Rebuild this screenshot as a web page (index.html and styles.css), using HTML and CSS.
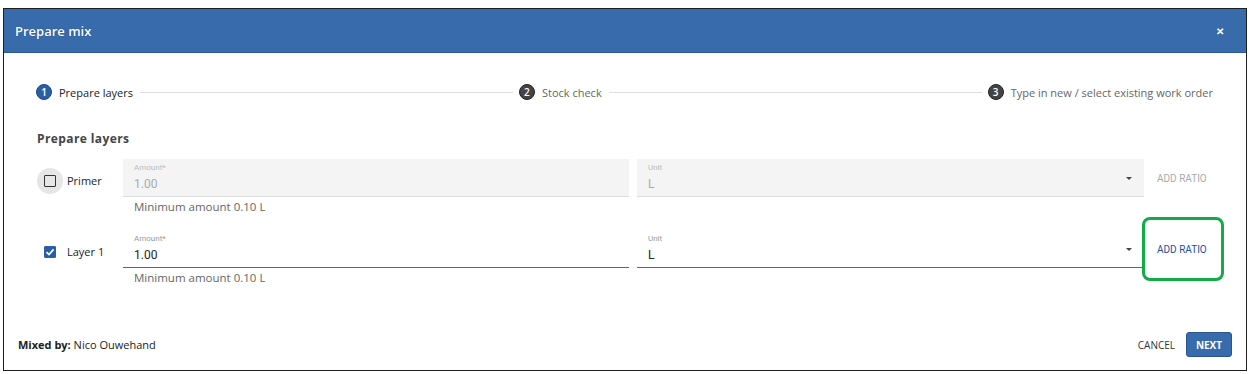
FILE: index.html
```html
<!DOCTYPE html>
<html lang="en">
<head>
    <meta charset="UTF-8">
    <title>Prepare mix</title>
    <link rel="stylesheet" href="styles.css">
</head>
<body>

<div class="dialog">
    <div class="dialog-header">
        <span class="dialog-title">Prepare mix</span>
        <span class="dialog-close">&#x2715;</span>
    </div>

    <div class="dialog-body">
        <div class="stepper">
            <div class="step active"><span class="step-num">1</span>Prepare layers</div>
            <div class="step-line"></div>
            <div class="step"><span class="step-num">2</span>Stock check</div>
            <div class="step-line"></div>
            <div class="step"><span class="step-num">3</span>Type in new / select existing work order</div>
        </div>

        <h3 class="section-title">Prepare layers</h3>

        <div class="layer-row">
            <div class="layer-check">
                <span class="ripple"><span class="checkbox"></span></span>
                <span class="layer-name">Primer</span>
            </div>
            <div class="field-col">
                <div class="field disabled">
                    <span class="field-label">Amount*</span>
                    <span class="field-value">1.00</span>
                </div>
                <div class="helper">Minimum amount 0.10 L</div>
            </div>
            <div class="field-col">
                <div class="field disabled select">
                    <span class="field-label">Unit</span>
                    <span class="field-value">L</span>
                    <span class="caret"></span>
                </div>
            </div>
            <div class="ratio-cell"><span class="ratio-btn disabled">ADD RATIO</span></div>
        </div>

        <div class="layer-row">
            <div class="layer-check">
                <span class="ripple plain"><span class="checkbox checked">
                    <svg width="10" height="10" viewBox="0 0 10 10"><path d="M1.5 5.2 L4 7.6 L8.6 2.4" fill="none" stroke="#fff" stroke-width="1.6"/></svg>
                </span></span>
                <span class="layer-name">Layer 1</span>
            </div>
            <div class="field-col">
                <div class="field">
                    <span class="field-label">Amount*</span>
                    <span class="field-value">1.00</span>
                </div>
                <div class="helper">Minimum amount 0.10 L</div>
            </div>
            <div class="field-col">
                <div class="field select">
                    <span class="field-label">Unit</span>
                    <span class="field-value">L</span>
                    <span class="caret"></span>
                </div>
            </div>
            <div class="ratio-cell"><span class="ratio-btn highlight">ADD RATIO</span></div>
        </div>
    </div>

    <div class="dialog-footer">
        <div class="mixed-by"><b>Mixed by:</b> Nico Ouwehand</div>
        <div class="actions">
            <button class="btn-text">CANCEL</button>
            <button class="btn-primary">NEXT</button>
        </div>
    </div>
</div>

</body>
</html>
```

FILE: styles.css
```css
body {
    margin: 0;
    padding: 8px 0 0 3px;
    background: #fff;
    font-family: "Open Sans", Arial, sans-serif;
}
.dialog {
    width: 1242px;
    height: 361px;
    border: 1px solid #1e1e1e;
    display: flex;
    flex-direction: column;
    box-sizing: content-box;
}
.dialog-header {
    height: 43px;
    background-color: #386bab;
    border-bottom: 1px solid #2d5b96;
    display: flex;
    align-items: center;
    justify-content: space-between;
    padding: 0 22px 0 11px;
    color: white;
}
.dialog-title {
    font-size: 13px;
    font-weight: 600;
    text-shadow: 0 0 1px #1b3c6b;
}
.dialog-close {
    font-size: 10px;
    font-weight: bold;
}
.dialog-body {
    padding: 30px 20px 0 32px;
}
.stepper {
    display: flex;
    align-items: center;
    height: 18px;
    margin-right: 13px;
}
.step {
    display: flex;
    align-items: center;
    font-size: 11px;
    color: #666;
    white-space: nowrap;
}
.step.active {
    color: #222;
}
.step-num {
    width: 16px;
    height: 16px;
    border-radius: 50%;
    background-color: #444;
    color: white;
    font-size: 10px;
    font-weight: 600;
    display: inline-flex;
    align-items: center;
    justify-content: center;
    margin-right: 7px;
    box-sizing: border-box;
    border: 1px solid #222;
}
.step.active .step-num {
    background-color: #2a5ea5;
    border-color: #1d4987;
}
.step-line {
    flex: 1;
    height: 1px;
    background-color: #ddd;
    margin: 0 6px 0 7px;
}
.section-title {
    font-size: 12px;
    font-weight: bold;
    color: #444;
    letter-spacing: 0.4px;
    margin: 29px 0 12px 1px;
}
.layer-row {
    display: flex;
    height: 71px;
}
.layer-check {
    width: 87px;
    height: 38px;
    padding-top: 5px;
    box-sizing: border-box;
    flex-shrink: 0;
    display: flex;
    align-items: center;
}
.ripple {
    width: 26px;
    height: 26px;
    border-radius: 50%;
    background-color: #e6e6e6;
    display: flex;
    align-items: center;
    justify-content: center;
    margin: 0 4px 0 1px;
}
.ripple.plain {
    background: none;
}
.checkbox {
    width: 12px;
    height: 12px;
    border: 1.5px solid #333;
    border-radius: 1px;
    box-sizing: border-box;
    display: flex;
    align-items: center;
    justify-content: center;
}
.checkbox.checked {
    background-color: #2a5ea5;
    border-color: #2a5ea5;
}
.layer-name {
    font-size: 11px;
    color: #222;
}
.field-col {
    width: 506px;
    flex-shrink: 0;
    margin-right: 8px;
}
.field-col + .field-col {
    width: 507px;
}
.field {
    position: relative;
    height: 38px;
    border-bottom: 1px solid #666;
    box-sizing: border-box;
    padding: 4px 11px 0;
    display: flex;
    flex-direction: column;
}
.field.disabled {
    background-color: #f4f4f4;
    border-bottom-color: #ddd;
}
.field-label {
    font-family: Roboto, Arial, sans-serif;
    font-size: 8px;
    color: #999;
    height: 11px;
}
.field.disabled .field-label {
    color: #bbb;
}
.field-value {
    font-family: Roboto, Arial, sans-serif;
    font-size: 12px;
    color: #222;
    margin-top: 3px;
}
.field.disabled .field-value {
    color: #aaa;
}
.caret {
    position: absolute;
    right: 12px;
    top: 18px;
    border-left: 3px solid transparent;
    border-right: 3px solid transparent;
    border-top: 3px solid #444;
}
.helper {
    font-size: 11.5px;
    color: #666;
    padding: 2px 0 0 11px;
}
.ratio-cell {
    height: 38px;
    display: flex;
    align-items: center;
    margin-left: -8px;
}
.ratio-btn {
    font-family: Roboto, Arial, sans-serif;
    font-size: 10px;
    color: #aaa;
    padding: 0 13px;
    white-space: nowrap;
}
.ratio-btn.highlight {
    color: #1d4fa0;
    border: 3px solid #12ab48;
    border-radius: 8px;
    height: 64px;
    width: 82px;
    flex-shrink: 0;
    box-sizing: border-box;
    display: flex;
    align-items: center;
    padding: 0 0 0 12px;
    margin-left: -2px;
}
.dialog-footer {
    margin-top: auto;
    display: flex;
    align-items: center;
    justify-content: space-between;
    padding: 0 14px 13px 14px;
}
.mixed-by {
    font-size: 11px;
    color: #222;
}
.actions {
    display: flex;
    align-items: center;
}
.btn-text {
    font-family: "Open Sans", Arial, sans-serif;
    font-size: 10px;
    color: #333;
    background: none;
    border: none;
    padding: 0;
    margin-right: 11px;
}
.btn-primary {
    font-family: "Open Sans", Arial, sans-serif;
    font-size: 10px;
    font-weight: bold;
    color: white;
    background-color: #386bab;
    border: 1px solid #2a5590;
    border-radius: 3px;
    width: 46px;
    height: 25px;
    padding: 0;
}
```
